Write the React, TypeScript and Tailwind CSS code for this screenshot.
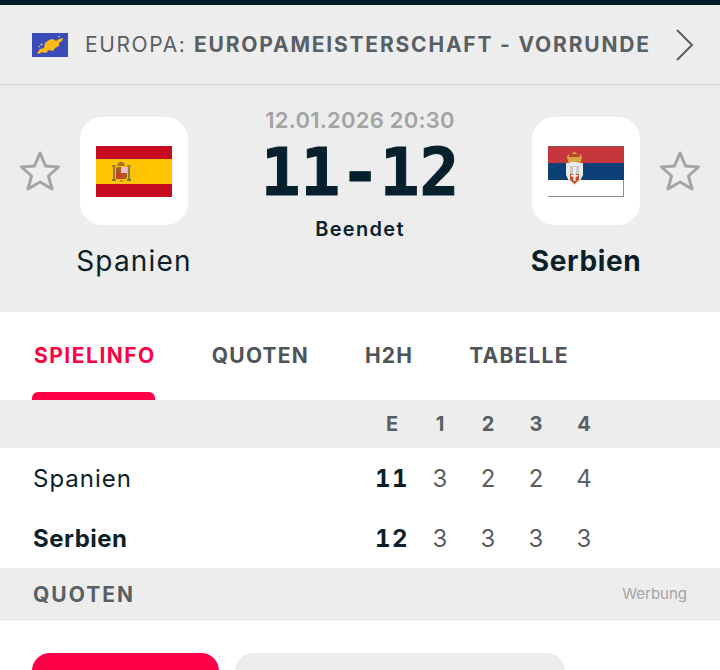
const sans = "font-['Inter','Liberation_Sans',sans-serif]"

function EuropeFlag() {
  return (
    <svg width="36" height="24" viewBox="0 0 36 24" className="shrink-0">
      <rect width="36" height="24" fill="#3b4cb8" />
      <path d="M5 20l3-4 4-1 1-5 4-3 4-1 3 2 3-2 4-1-1 3-3 2 0 3-4 2-2 3-4-1-3 3-4-1-3 2z" fill="#fbb914" />
      <circle cx="9.500" cy="11.500" r="1" fill="#d9d29a" />
      <circle cx="7" cy="13.500" r=".8" fill="#d9d29a" />
      <circle cx="27" cy="3.500" r=".8" fill="#d9d29a" />
    </svg>
  )
}

function SpainFlag() {
  return (
    <svg width="76" height="51" viewBox="0 0 76 51">
      <rect width="76" height="51" fill="#c60b1e" />
      <rect y="13" width="76" height="25" fill="#ffc400" />
      {/* wappen */}
      <rect x="20" y="21" width="11" height="12" rx="2" fill="#ad5a1e" />
      <rect x="25" y="21" width="6" height="6" fill="#e8bcc8" />
      <rect x="20" y="27" width="5" height="6" fill="#c8401e" />
      <path d="M21 20l1-3 3-1.500 3 1.500 1 3z" fill="#a8741a" />
      <rect x="24.500" y="34" width="2" height="2" fill="#a8741a" />
      <rect x="17" y="21" width="2" height="12" fill="#8f7c44" />
      <rect x="32" y="21" width="2" height="12" fill="#8f7c44" />
      <rect x="16" y="19" width="4" height="2" fill="#b5852a" />
      <rect x="31" y="19" width="4" height="2" fill="#b5852a" />
      <rect x="16" y="33" width="4" height="2" fill="#7d7440" />
      <rect x="31" y="33" width="4" height="2" fill="#7d7440" />
    </svg>
  )
}

function SerbiaFlag() {
  return (
    <svg width="76" height="51" viewBox="0 0 76 51">
      <rect width="76" height="17" fill="#c6363c" />
      <rect y="17" width="76" height="17" fill="#0c4076" />
      <rect y="34" width="76" height="17" fill="#ffffff" />
      <rect y="50" width="76" height="1" fill="#8f8f8f" />
      <rect x="75" y="34" width="1" height="17" fill="#8f8f8f" />
      <rect y="0" width="76" height="1" fill="#8f4a4a" />
      {/* grb */}
      <path d="M19 11l1.500-3 3 0 3-2.500 3 2.500 3 0 1.500 3-1.500 6h-12z" fill="#d9a441" />
      <rect x="21" y="8" width="11" height="3" fill="#b8452e" />
      <path d="M18 17h4v-1h8v1h5v12l-3 6-5.500 5-5.500-5-3-6z" fill="#ececec" />
      <path d="M22 20h9v8h-9z" fill="#c9c9c9" />
      <path d="M22 28h9v6l-4.500 4-4.500-4z" fill="#c6502c" />
      <path d="M25.500 21h2v14h-2z" fill="#ffffff" />
      <path d="M23 29h7v1.500h-7z" fill="#ffffff" />
    </svg>
  )
}

function Team({ name, bold, flag }: { name: string; bold?: boolean; flag: React.ReactNode }) {
  return (
    <div className="flex w-[130px] flex-col items-center">
      <div className="flex h-[108px] w-[108px] items-center justify-center rounded-[22px] bg-white">{flag}</div>
      <div className={`mt-[18px] whitespace-nowrap text-[28px] leading-[36px] text-[#0b1f2a] ${bold ? 'font-bold tracking-[0.6px]' : 'font-normal tracking-[1.2px]'}`}>
        {name}
      </div>
    </div>
  )
}

function FavStar() {
  return (
    <svg width="40" height="40" viewBox="0 0 40 40" className="mt-[34px] shrink-0" fill="none" stroke="#a5a5a5" strokeWidth="3" strokeLinejoin="round">
      <path d="M20 2l5.500 13 13 1-10 9 3.500 13-12-7-12 7 3.500-13-10-9 13-1z" />
    </svg>
  )
}

const tabs = ['SPIELINFO', 'QUOTEN', 'H2H', 'TABELLE']

const rows = [
  { name: 'Spanien', total: 11, sets: [3, 2, 2, 4], bold: false },
  { name: 'Serbien', total: 12, sets: [3, 3, 3, 3], bold: true },
]

export default function App() {
  return (
    <div className={`h-[670px] w-[720px] overflow-hidden bg-white ${sans}`}>
      <div className="h-[5px] bg-[#001e28]" />

      <div className="flex h-[80px] items-center border-b border-[#cfcfcf] bg-[#eeeded] pl-[32px] pr-[25px]">
        <EuropeFlag />
        <div className="ml-[17px] flex-1 whitespace-nowrap text-[21px] tracking-[1.6px] text-[#586064]">
          EUROPA: <span className="font-bold tracking-[1.8px]">EUROPAMEISTERSCHAFT - VORRUNDE</span>
        </div>
        <svg width="20" height="34" viewBox="0 0 20 34" fill="none" stroke="#586064" strokeWidth="2" className="shrink-0">
          <path d="M2 2l15 15-15 15" />
        </svg>
      </div>

      <div className="flex h-[227px] justify-between bg-[#ededed] px-[20px] pt-[32px]">
        <div className="flex gap-[9px]">
          <FavStar />
          <Team name="Spanien" flag={<SpainFlag />} />
        </div>
        <div className="-mt-[10px] flex w-[220px] flex-col items-center">
          <div className="text-[22px] font-semibold leading-[26px] tracking-[0.25px] text-[#a3a3a3]">12.01.2026 20:30</div>
          <div className="mt-[11px] font-['DejaVu_Sans_Mono',monospace] text-[66px] font-bold leading-[58px] text-[#04202c] [-webkit-text-stroke:1px_#04202c]">11-12</div>
          <div className="mt-[14px] text-[20px] font-semibold leading-[26px] tracking-[1.3px] text-[#0b1f2a]">Beendet</div>
        </div>
        <div className="flex gap-[9px]">
          <Team name="Serbien" bold flag={<SerbiaFlag />} />
          <FavStar />
        </div>
      </div>

      <div className="flex h-[88px] items-stretch gap-[56px] pl-[34px]">
        {tabs.map((t, i) => (
          <div key={t} className="relative flex items-center">
            <span className={`text-[21px] font-bold ${i === 0 ? 'tracking-[1.5px] text-[#ff0046]' : 'tracking-[1.2px] text-[#4e5458]'}`}>{t}</span>
            {i === 0 && <div className="absolute bottom-0 -left-[2px] right-[1px] h-[8px] rounded-t-[6px] bg-[#ff0046]" />}
          </div>
        ))}
      </div>

      <div className="flex h-[48px] items-center bg-[#ededed] pr-[112px] text-[20px] font-bold text-[#586064]">
        <div className="ml-auto flex">
          {['E', '1', '2', '3', '4'].map((h) => (
            <div key={h} className="w-[48px] text-center">{h}</div>
          ))}
        </div>
      </div>

      <div className="h-[120px]">
        {rows.map((r) => (
          <div key={r.name} className="flex h-[60px] items-center pl-[33px] pr-[112px] pt-[2px]">
            <div className={`flex-1 text-[24px] text-[#0b1f2a] ${r.bold ? 'font-bold tracking-[0.5px]' : 'tracking-[1px]'}`}>{r.name}</div>
            <div className="w-[48px] text-center text-[24px] font-bold tabular-nums tracking-[1.5px] text-[#0b1f2a]">{r.total}</div>
            {r.sets.map((s, i) => (
              <div key={i} className="w-[48px] text-center text-[24px] text-[#586064]">{s}</div>
            ))}
          </div>
        ))}
      </div>

      <div className="flex h-[53px] items-center justify-between bg-[#ededed] px-[33px]">
        <div className="text-[21px] font-bold tracking-[2px] text-[#586064]">QUOTEN</div>
        <div className="text-[15px] text-[#a3a3a3]">Werbung</div>
      </div>

      <div className="flex gap-[16px] pl-[32px] pt-[32px]">
        <div className="h-[60px] w-[187px] rounded-[18px] bg-[#ff0046]" />
        <div className="h-[60px] w-[330px] rounded-[18px] bg-[#ededed]" />
      </div>
    </div>
  )
}
